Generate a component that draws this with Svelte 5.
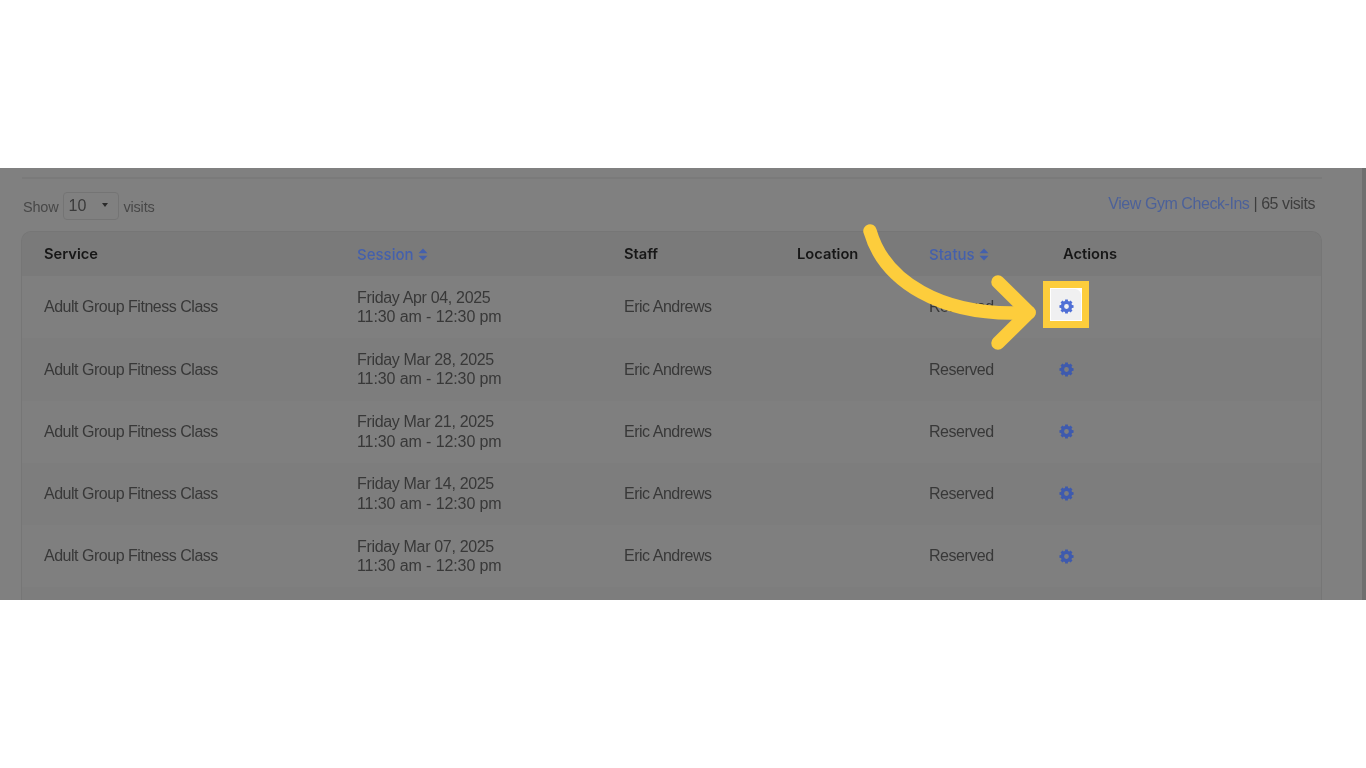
<script>
  const rows = [
    'Friday Apr 04, 2025',
    'Friday Mar 28, 2025',
    'Friday Mar 21, 2025',
    'Friday Mar 14, 2025',
    'Friday Mar 07, 2025'
  ];
  function cogPath(teeth, outer, root, hole) {
    const pt = (r, deg) => {
      const a = (deg * Math.PI) / 180;
      return `${(r * Math.cos(a)).toFixed(2)} ${(r * Math.sin(a)).toFixed(2)}`;
    };
    let d = '';
    for (let i = 0; i < teeth; i++) {
      const c = (360 / teeth) * i - 90;
      d += `${i ? 'L' : 'M'}${pt(root, c - 15)}L${pt(outer, c - 11)}L${pt(outer, c + 11)}L${pt(root, c + 15)}`;
    }
    d += `ZM${hole} 0A${hole} ${hole} 0 1 0 ${-hole} 0A${hole} ${hole} 0 1 0 ${hole} 0Z`;
    return d;
  }
  const gear = cogPath(8, 7.2, 5.7, 2.4);
</script>

<div class="page">
  <main class="stage">
    <div class="content">
      <div class="rule"></div>
      <div class="toolbar">
        <div class="show">
          <span>Show</span>
          <span class="select">10<i class="caret"></i></span>
          <span>visits</span>
        </div>
        <div class="totals"><a href="#top">View Gym Check-Ins</a> | 65 visits</div>
      </div>
      <div class="table">
        <div class="row head">
          <div>Service</div>
          <div class="sort">Session
            <svg class="updown" viewBox="0 0 10 12"><path d="M5 0l4.5 4.8h-9zM5 12L.5 7.2h9z" /></svg>
          </div>
          <div>Staff</div>
          <div>Location</div>
          <div class="sort">Status
            <svg class="updown" viewBox="0 0 10 12"><path d="M5 0l4.5 4.8h-9zM5 12L.5 7.2h9z" /></svg>
          </div>
          <div>Actions</div>
        </div>
        {#each rows as date, i}
          <div class="row body" class:alt={i % 2 === 1}>
            <div>Adult Group Fitness Class</div>
            <div class="when"><div class="date">{date}</div><div class="time">11:30 am - 12:30 pm</div></div>
            <div>Eric Andrews</div>
            <div></div>
            <div>Reserved</div>
            <div class="act"><svg class="gear" viewBox="-7.5 -7.5 15 15"><path fill-rule="evenodd" d={gear} /></svg></div>
          </div>
        {/each}
      </div>
    </div>
    <div class="scrollbar"></div>
    <svg class="arrow" viewBox="0 0 1366 432">
      <path d="M870 63C884 112 940 150 1029 144.5" />
      <path d="M998 114L1029 144.5L998 175" />
    </svg>
    <div class="spot">
      <div class="spot-inner"><svg class="gear" viewBox="-7.5 -7.5 15 15"><path fill-rule="evenodd" d={gear} /></svg></div>
    </div>
  </main>
</div>

<style>
  :global(body) {
    margin: 0;
    background: #fff;
  }
  .page {
    height: 768px;
    padding-top: 168px;
    box-sizing: border-box;
    overflow: hidden;
    font-family: "Liberation Sans", Arial, sans-serif;
  }
  .stage {
    position: relative;
    height: 432px;
    background: #808080;
    overflow: hidden;
  }
  .content {
    padding: 9px 44px 0 22px;
    filter: blur(0.55px);
  }
  .rule {
    height: 2px;
    background: #7a7a7a;
  }
  .toolbar {
    display: flex;
    justify-content: space-between;
    height: 52px;
    color: #3d3d3d;
  }
  .show {
    display: flex;
    align-items: center;
    gap: 4px;
    height: 54px;
    padding-left: 1px;
    font-size: 14.5px;
    letter-spacing: -0.2px;
    color: #474747;
  }
  .show > span:not(.select) {
    padding-top: 2px;
  }
  .select {
    position: relative;
    box-sizing: border-box;
    width: 56px;
    height: 28px;
    margin: 0 0 0 1px;
    padding-left: 4px;
    border: 1px solid #747474;
    border-radius: 4px;
    font-size: 16px;
    letter-spacing: 0;
    line-height: 25px;
    color: #3a3a3a;
  }
  .caret {
    position: absolute;
    top: 10px;
    right: 10px;
    border: 3.5px solid transparent;
    border-top: 4px solid #2b2b2b;
    border-bottom: 0;
  }
  .totals {
    margin: 16px 7px 0 0;
    font-size: 16px;
    letter-spacing: -0.44px;
    line-height: 18px;
  }
  .totals a {
    color: #4c6199;
    text-decoration: none;
  }
  .table {
    width: 1301px;
    height: 400px;
    margin-left: -1px;
    border: 1px solid #767676;
    border-bottom: 0;
    border-radius: 10px 10px 0 0;
    box-sizing: border-box;
    background: #7d7d7d;
  }
  .row {
    display: grid;
    grid-template-columns: 313px 267px 173px 132px 134px 1fr;
    padding-left: 22px;
    align-items: center;
  }
  .head {
    height: 44px;
    background: #7a7a7a;
    border-radius: 9px 9px 0 0;
    font: 600 14.7px Inter, "Liberation Sans", sans-serif;
    color: #171717;
  }
  .sort {
    display: flex;
    align-items: center;
    gap: 4px;
    font-weight: 500;
    font-size: 15px;
    color: #4460ac;
  }
  .updown {
    width: 10px;
    height: 13px;
    fill: #4460ac;
  }
  .body {
    height: 62.25px;
    font-size: 16px;
    letter-spacing: -0.48px;
    line-height: 19.5px;
    color: #383838;
    background: #7f7f7f;
  }
  .alt {
    background: #7d7d7d;
  }
  .date {
    letter-spacing: -0.33px;
  }
  .time {
    letter-spacing: -0.1px;
  }
  .gear {
    display: block;
    width: 15px;
    height: 15px;
    fill: #3e5aae;
  }
  .act .gear {
    margin-left: -4px;
  }
  .scrollbar {
    position: absolute;
    top: 0;
    right: 0;
    bottom: 0;
    width: 4px;
    background: #6f6f6f;
  }
  .arrow {
    position: absolute;
    inset: 0;
    width: 1366px;
    height: 432px;
    fill: none;
    stroke: #fdcd3c;
    stroke-width: 13.5;
    stroke-linecap: round;
    stroke-linejoin: round;
  }
  .spot {
    position: absolute;
    left: 1043px;
    top: 113px;
    box-sizing: border-box;
    width: 46px;
    height: 47px;
    border: 7px solid #fdcd3c;
    background: #fff;
    padding: 1px;
    filter: blur(0.3px);
  }
  .spot-inner {
    height: 100%;
    border-radius: 0 6px 0 0;
    background: #f0f0f1;
    display: flex;
    align-items: center;
    justify-content: center;
    padding-top: 3px;
    box-sizing: border-box;
  }
  .spot .gear {
    fill: #4f6fd6;
  }
</style>
